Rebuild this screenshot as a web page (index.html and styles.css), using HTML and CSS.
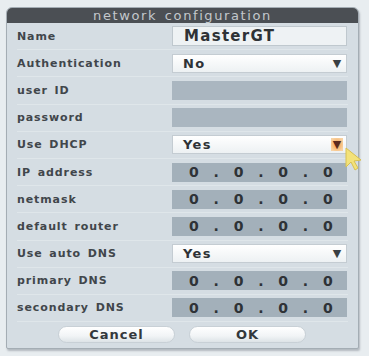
FILE: index.html
```html
<!DOCTYPE html>
<html lang="en">
<head>
    <meta charset="UTF-8">
    <meta name="viewport" content="width=device-width, initial-scale=1.0">
    <title>network configuration</title>
    <link rel="stylesheet" href="styles.css">
</head>
<body>
    <div class="panel">
        <div class="title">network configuration</div>

        <div class="rows">
            <div class="row">
                <span class="label">Name</span>
                <div class="field text big">MasterGT</div>
            </div>
            <div class="row">
                <span class="label">Authentication</span>
                <div class="field select">No<span class="arrow">▼</span></div>
            </div>
            <div class="row">
                <span class="label">user ID</span>
                <div class="field blank"></div>
            </div>
            <div class="row">
                <span class="label">password</span>
                <div class="field blank"></div>
            </div>
            <div class="row">
                <span class="label">Use DHCP</span>
                <div class="field select">Yes<span class="arrow hot">▼</span></div>
            </div>
            <div class="row">
                <span class="label">IP address</span>
                <div class="field ip"><span>0</span><span>.</span><span>0</span><span>.</span><span>0</span><span>.</span><span>0</span></div>
            </div>
            <div class="row">
                <span class="label">netmask</span>
                <div class="field ip"><span>0</span><span>.</span><span>0</span><span>.</span><span>0</span><span>.</span><span>0</span></div>
            </div>
            <div class="row">
                <span class="label">default router</span>
                <div class="field ip"><span>0</span><span>.</span><span>0</span><span>.</span><span>0</span><span>.</span><span>0</span></div>
            </div>
            <div class="row">
                <span class="label">Use auto DNS</span>
                <div class="field select">Yes<span class="arrow">▼</span></div>
            </div>
            <div class="row">
                <span class="label">primary DNS</span>
                <div class="field ip"><span>0</span><span>.</span><span>0</span><span>.</span><span>0</span><span>.</span><span>0</span></div>
            </div>
            <div class="row">
                <span class="label">secondary DNS</span>
                <div class="field ip"><span>0</span><span>.</span><span>0</span><span>.</span><span>0</span><span>.</span><span>0</span></div>
            </div>
        </div>

        <div class="buttons">
            <button class="btn">Cancel</button>
            <button class="btn">OK</button>
        </div>
    </div>

    <svg class="cursor" width="18" height="24" viewBox="0 0 18 24">
        <path d="M2 1 L2 20 L7 15 L11 23 L14 21 L10 14 L17 13 Z" fill="#f3e27a" stroke="#d8c050" stroke-width="1"/>
    </svg>
</body>
</html>
```

FILE: styles.css
```css
html, body {
    margin: 0;
    padding: 0;
    background-color: #e8edf0;
    font-family: "DejaVu Sans", sans-serif;
}

body {
    position: relative;
    width: 369px;
    height: 356px;
    padding: 7px 0 0 6px;
    box-sizing: border-box;
}

.panel {
    width: 353px;
    height: 342px;
    box-sizing: border-box;
    background-color: #d5dde3;
    border: 1px solid #a4adb4;
    border-radius: 6px 6px 2px 2px;
    box-shadow: 1px 2px 2px rgba(80, 90, 100, 0.35);
    overflow: hidden;
    display: flex;
    flex-direction: column;
}

.title {
    height: 15px;
    line-height: 15px;
    background-color: #4b4f54;
    color: #c3c8cc;
    font-size: 13px;
    letter-spacing: 1.6px;
    word-spacing: 2px;
    text-align: center;
}

.rows {
    display: flex;
    flex-direction: column;
    padding: 0 10px 0 10px;
}

.row {
    height: 27.2px;
    display: grid;
    grid-template-columns: 155px 175px;
    align-items: center;
    border-bottom: 1px solid #dfe6ea;
    box-sizing: border-box;
}

.label {
    font-size: 11px;
    font-weight: bold;
    color: #41464b;
    letter-spacing: 0.9px;
    word-spacing: 2px;
}

.field {
    height: 19px;
    box-sizing: border-box;
    color: #2e3236;
    font-weight: bold;
    font-size: 13px;
    letter-spacing: 1.3px;
    display: flex;
    align-items: center;
}

.text {
    background-color: #eef2f4;
    border: 1px solid #bfc8ce;
    padding-left: 11px;
}

.big {
    font-size: 15px;
    height: 20px;
}

.select {
    background: linear-gradient(#ffffff, #edf1f3);
    border: 1px solid #c4ccd2;
    padding-left: 10px;
    position: relative;
}

.arrow {
    position: absolute;
    right: 3px;
    top: 2px;
    width: 12px;
    height: 13px;
    font-size: 11px;
    line-height: 13px;
    text-align: center;
    color: #3a3f44;
    letter-spacing: 0;
}

.arrow.hot {
    background: radial-gradient(ellipse at center, #f7a95a 20%, #f8d3a4 80%);
    color: #5a2a20;
}

.blank {
    background-color: #aab6c0;
}

.ip {
    background-color: #a3b0ba;
    justify-content: space-between;
    padding: 0 13px 0 17px;
    font-size: 14px;
}

.buttons {
    display: flex;
    gap: 14px;
    padding: 4px 0 0 51px;
}

.btn {
    width: 117px;
    height: 17px;
    padding: 0;
    border: 1px solid #c8d0d6;
    border-radius: 9px;
    background: linear-gradient(#ffffff, #f1f4f6 60%, #dde3e7);
    font-family: "DejaVu Sans", sans-serif;
    font-weight: bold;
    font-size: 13px;
    line-height: 15px;
    letter-spacing: 1px;
    color: #33383c;
}

.cursor {
    position: absolute;
    left: 344px;
    top: 147px;
}
```
